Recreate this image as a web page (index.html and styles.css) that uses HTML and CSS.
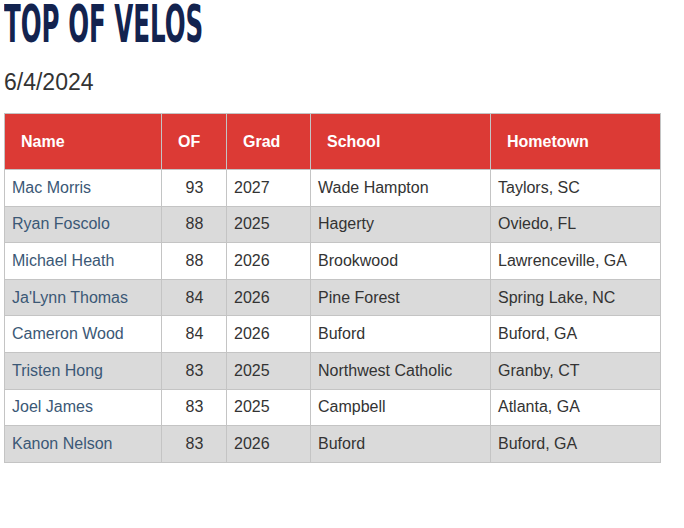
FILE: index.html
```html
<!DOCTYPE html>
<html>
<head>
<meta charset="utf-8">
<link rel="stylesheet" href="styles.css">
</head>
<body>
<h1 class="title"><span class="title-text">TOP OF VELOS</span></h1>
<p class="date">6/4/2024</p>
<table class="velos">
  <colgroup>
    <col class="c-name">
    <col class="c-of">
    <col class="c-grad">
    <col class="c-school">
    <col class="c-home">
  </colgroup>
  <thead>
    <tr>
      <th>Name</th>
      <th>OF</th>
      <th>Grad</th>
      <th>School</th>
      <th>Hometown</th>
    </tr>
  </thead>
  <tbody>
    <tr><td><a href="#">Mac Morris</a></td><td class="num">93</td><td>2027</td><td>Wade Hampton</td><td>Taylors, SC</td></tr>
    <tr><td><a href="#">Ryan Foscolo</a></td><td class="num">88</td><td>2025</td><td>Hagerty</td><td>Oviedo, FL</td></tr>
    <tr><td><a href="#">Michael Heath</a></td><td class="num">88</td><td>2026</td><td>Brookwood</td><td>Lawrenceville, GA</td></tr>
    <tr><td><a href="#">Ja'Lynn Thomas</a></td><td class="num">84</td><td>2026</td><td>Pine Forest</td><td>Spring Lake, NC</td></tr>
    <tr><td><a href="#">Cameron Wood</a></td><td class="num">84</td><td>2026</td><td>Buford</td><td>Buford, GA</td></tr>
    <tr><td><a href="#">Tristen Hong</a></td><td class="num">83</td><td>2025</td><td>Northwest Catholic</td><td>Granby, CT</td></tr>
    <tr><td><a href="#">Joel James</a></td><td class="num">83</td><td>2025</td><td>Campbell</td><td>Atlanta, GA</td></tr>
    <tr><td><a href="#">Kanon Nelson</a></td><td class="num">83</td><td>2026</td><td>Buford</td><td>Buford, GA</td></tr>
  </tbody>
</table>
</body>
</html>
```
FILE: styles.css
```css
html, body {
  margin: 0;
  padding: 0;
  background: #ffffff;
}
body {
  padding: 0 4px;
  font-family: "Liberation Sans", Arial, sans-serif;
  color: #333333;
}
.title {
  margin: 0;
  font-family: "DejaVu Sans Condensed", "DejaVu Sans", sans-serif;
  font-weight: bold;
  font-size: 51px;
  line-height: 49px;
  color: #13234f;
}
.title-text {
  display: inline-block;
  transform: scaleX(0.535);
  transform-origin: 0 0;
  white-space: nowrap;
}
.date {
  margin: 19px 0 17px;
  font-size: 23px;
  line-height: 28px;
  color: #333333;
}
.velos {
  border-collapse: collapse;
  table-layout: fixed;
  width: 657px;
  font-size: 16px;
}
.velos th, .velos td {
  border: 1px solid #c4c4c4;
  text-align: left;
  vertical-align: middle;
  white-space: nowrap;
}
.velos th {
  background: #dc3a35;
  color: #ffffff;
  font-weight: bold;
  height: 55px;
  padding: 0 16px;
}
.velos td {
  height: 35.6px;
  padding: 0 6px 0 7px;
  line-height: 18px;
}
.velos tbody tr:nth-child(even) td {
  background: #dadada;
}
.velos td.num {
  text-align: center;
}
.velos a {
  color: #3b5876;
  text-decoration: none;
}
.c-name { width: 157px; }
.c-of { width: 65px; }
.c-grad { width: 84px; }
.c-school { width: 180px; }
.c-home { width: 170px; }
```
